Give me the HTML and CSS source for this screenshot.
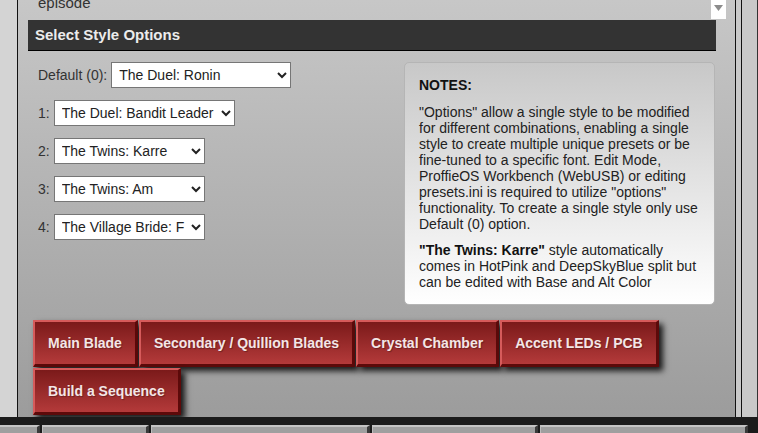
FILE: index.html
```html
<!DOCTYPE html>
<html lang="en">
<head>
  <meta charset="UTF-8">
  <meta name="viewport" content="width=device-width, initial-scale=1.0">
  <title>Style Options</title>
  <link rel="stylesheet" href="styles.css">
</head>
<body>
  <div class="frame">
    <div class="gutter-left"></div>

    <main class="panel">
      <div class="episode-row">
        <span class="episode">episode</span>
        <span class="scroll-arrow">
          <svg width="9" height="6" viewBox="0 0 9 6"><path d="M0 0h9L4.5 6z" fill="#8c8c8c"/></svg>
        </span>
      </div>

      <h2 class="section-title">Select Style Options</h2>

      <div class="options">
        <div class="option-list">
          <label class="option-row">Default (0):
            <select class="style-select select-default">
              <option>The Duel: Ronin</option>
            </select>
          </label>
          <label class="option-row">1:
            <select class="style-select select-one">
              <option>The Duel: Bandit Leader</option>
            </select>
          </label>
          <label class="option-row">2:
            <select class="style-select">
              <option>The Twins: Karre</option>
            </select>
          </label>
          <label class="option-row">3:
            <select class="style-select">
              <option>The Twins: Am</option>
            </select>
          </label>
          <label class="option-row">4:
            <select class="style-select">
              <option>The Village Bride: F</option>
            </select>
          </label>
        </div>

        <aside class="notes">
          <h3 class="notes-title">NOTES:</h3>
          <p>"Options" allow a single style to be modified for different combinations, enabling a single style to create multiple unique presets or be fine-tuned to a specific font. Edit Mode, ProffieOS Workbench (WebUSB) or editing presets.ini is required to utilize "options" functionality. To create a single style only use Default (0) option.</p>
          <p><strong>"The Twins: Karre"</strong> style automatically comes in HotPink and DeepSkyBlue split but can be edited with Base and Alt Color</p>
        </aside>
      </div>

      <div class="blade-buttons">
        <button class="blade-btn">Main Blade</button>
        <button class="blade-btn">Secondary / Quillion Blades</button>
        <button class="blade-btn">Crystal Chamber</button>
        <button class="blade-btn">Accent LEDs / PCB</button>
        <button class="blade-btn">Build a Sequence</button>
      </div>
    </main>

    <div class="gutter-right"><div class="rail"></div></div>
  </div>

  <div class="footer-band"></div>
  <nav class="tabs">
    <div class="tab tab-1"></div>
    <div class="tab tab-2"></div>
    <div class="tab tab-3"></div>
    <div class="tab tab-4"></div>
    <div class="tab tab-5"></div>
  </nav>
</body>
</html>
```

FILE: styles.css
```css
html, body {
  margin: 0;
  padding: 0;
  height: 100%;
  overflow: hidden;
  font-family: "Liberation Sans", Arial, sans-serif;
  background-color: #1b1b1b;
  color: #333;
}
.frame {
  display: flex;
  height: 417px;
  overflow: hidden;
}
.gutter-left {
  width: 17px;
  background-color: #d4d4d4;
  border-right: 1px solid #111;
}
.panel {
  flex: 1;
  min-width: 0;
  padding: 0 9px 0 10px;
  background: linear-gradient(to bottom, #c7c7c7, #9c9c9c);
  overflow: hidden;
}
.gutter-right {
  width: 21px;
  background-color: #c9c9c9;
  border-left: 1px solid #111;
  border-right: 1px solid #333;
}
.rail {
  height: 100%;
  margin-left: 5px;
  border-left: 1px solid #111;
}
.episode-row {
  display: flex;
  justify-content: space-between;
  height: 20px;
  overflow: hidden;
}
.episode {
  margin: -6px 0 0 10px;
  font-size: 15px;
  line-height: 17px;
  color: #333;
}
.scroll-arrow {
  display: flex;
  justify-content: center;
  width: 15px;
  height: 19px;
  padding-top: 5px;
  box-sizing: border-box;
  background-color: #fff;
}
.section-title {
  margin: 0 10px 0 0;
  height: 30px;
  padding-left: 7px;
  line-height: 30px;
  font-size: 15px;
  font-weight: bold;
  color: #ececec;
  background-color: #333;
  border-bottom: 1px solid #000;
}
.options {
  display: flex;
  justify-content: space-between;
  margin-right: 11px;
  padding: 11px 0 0 10px;
}
.option-list {
  display: flex;
  flex-direction: column;
  gap: 12px;
}
.option-row {
  display: flex;
  align-items: center;
  gap: 4px;
  font-size: 14px;
  color: #333;
}
.style-select {
  width: 151px;
  height: 26px;
  padding: 0 3px;
  font-family: "Liberation Sans", Arial, sans-serif;
  font-size: 14px;
  color: #222;
  background-color: #fff;
  border: 1px solid #767676;
  border-radius: 0;
}
.select-default {
  width: 180px;
}
.select-one {
  width: 181px;
}
.notes {
  width: 311px;
  box-sizing: border-box;
  padding: 14px 14px 14px;
  border: 1px solid #b5b5b5;
  border-radius: 5px;
  background: linear-gradient(to bottom, #c8c8c8, #ffffff);
  font-size: 14px;
  line-height: 16px;
  color: #222;
}
.notes-title {
  margin: 0 0 11px;
  font-size: 14px;
  line-height: 16px;
  color: #111;
}
.notes p {
  margin: 0 0 10px;
}
.notes p:last-child {
  margin-bottom: 0;
}
.notes strong {
  color: #111;
}
.blade-buttons {
  display: flex;
  flex-wrap: wrap;
  gap: 1px;
  margin: 15px 0 0 5px;
}
.blade-btn {
  padding: 13px 13px 13px 13px;
  font-family: "Liberation Sans", Arial, sans-serif;
  font-size: 14px;
  font-weight: bold;
  line-height: 16px;
  color: #f3e6e6;
  text-shadow: 1px 1px 1px rgba(0, 0, 0, 0.3);
  background: linear-gradient(to bottom, #7b1a1a, #b43a3a);
  border-style: solid;
  border-width: 2px 3px 3px 2px;
  border-color: #d65b5b #5c0a0a #5c0a0a #d65b5b;
  border-radius: 0;
  box-shadow: 4px 4px 6px rgba(0, 0, 0, 0.85);
  cursor: pointer;
}
.footer-band {
  height: 8px;
  background-color: #1b1b1b;
}
.tabs {
  display: flex;
  gap: 2px;
  height: 20px;
  background-color: #1b1b1b;
}
.tab {
  box-sizing: border-box;
  background-color: #9f9f9f;
  border-top: 2px solid #c4c4c4;
  border-left: 1px solid #bdbdbd;
  border-right: 3px solid #3a3a3a;
}
.tab-1 { width: 40px; border-left: none; }
.tab-2 { width: 107px; }
.tab-3 { width: 219px; }
.tab-4 { width: 166px; }
.tab-5 { width: 208px; }
```
